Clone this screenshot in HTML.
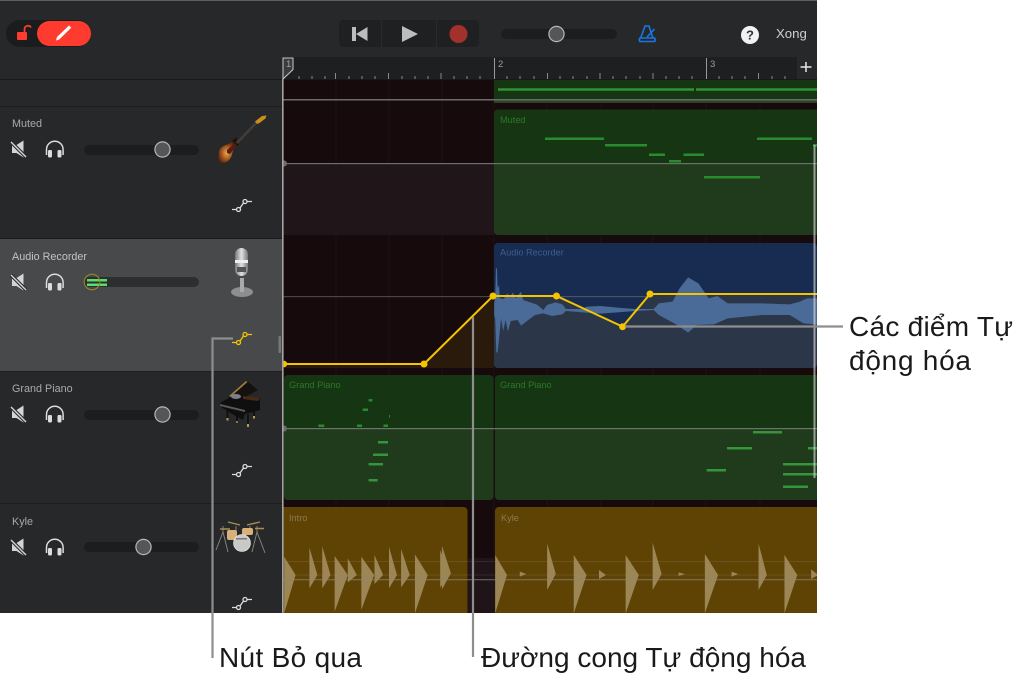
<!DOCTYPE html>
<html lang="vi"><head><meta charset="utf-8"><title>GarageBand</title>
<style>
html,body{margin:0;padding:0;background:#fff;width:1035px;height:686px;overflow:hidden}
svg{display:block;position:absolute;left:0;top:0}
text{font-family:"Liberation Sans",sans-serif}
.n{font-size:10.8px;fill:#a9aaab}
.r{font-size:9.2px}
.c{font-size:28px;fill:#1a1a1a}
</style></head><body>
<svg width="1035" height="686" viewBox="0 0 1035 686" xmlns="http://www.w3.org/2000/svg">
<defs>
<g id="mute"><path d="M12 145h4.500l7-4.500v17l-7-4.500H12z" fill="#d4d4d4"/><path d="M11 142l15 15" stroke="#27282a" stroke-width="3.500"/><path d="M11 142l15 15" stroke="#d4d4d4" stroke-width="1.400"/></g>
<g id="hp"><path d="M46.500 155v-5.500a8.300 8.300 0 0 1 16.600 0V155" fill="none" stroke="#dcdcdc" stroke-width="1.500"/><rect x="48" y="150" width="4" height="7.500" rx="1.200" fill="#dcdcdc"/><rect x="57.500" y="150" width="4" height="7.500" rx="1.200" fill="#dcdcdc"/></g>
<g id="auto" fill="none" stroke-width="1.300"><path d="M232 209.500h4M240 208l3.500-5M247 201.500h5"/><circle cx="238.500" cy="209.500" r="2"/><circle cx="245" cy="201.500" r="2"/></g>
<clipPath id="clipA"><rect x="494" y="243" width="323" height="125" rx="4"/></clipPath>
<clipPath id="clipT"><rect x="283" y="80" width="534" height="533"/></clipPath>
<linearGradient id="mic" x1="0" x2="1"><stop offset="0" stop-color="#777"/><stop offset=".5" stop-color="#e2e2e2"/><stop offset="1" stop-color="#777"/></linearGradient>
<radialGradient id="burst" cx=".4" cy=".62" r=".6"><stop offset="0" stop-color="#e8a94a"/><stop offset=".55" stop-color="#8c3f14"/><stop offset="1" stop-color="#1b0d08"/></radialGradient>
</defs>

<!-- app background -->
<rect width="817" height="613" fill="#27282a"/>
<rect width="817" height="1" fill="#5d5e5f"/>

<!-- top toolbar -->
<rect x="6" y="20" width="85" height="27" rx="13.500" fill="#1b1c1d"/>
<rect x="37" y="21" width="54" height="25" rx="12.500" fill="#ff3b30"/>
<rect x="17" y="32" width="10" height="8" rx="1" fill="#ff3b30"/>
<path d="M24.500 32v-3a3.500 3.500 0 0 1 6.500-1.500" fill="none" stroke="#ff3b30" stroke-width="1.700"/>
<path d="M56 40.500l1-3.500 12-11.500 2.200 2.200-12 11.800z" fill="#fff"/>
<rect x="339" y="20" width="140" height="27" rx="4" fill="#1f2021"/>
<path d="M381.500 20v27M436.500 20v27" stroke="#292a2b"/>
<rect x="352" y="27" width="4" height="14" fill="#bdbdbd"/><path d="M367.500 27v14L356 34z" fill="#bdbdbd"/>
<path d="M402 26v16l16-8z" fill="#bdbdbd"/>
<circle cx="458.500" cy="34" r="9" fill="#a2302b"/>
<rect x="501" y="29" width="116" height="10" rx="5" fill="#1c1d1e"/>
<circle cx="556.500" cy="34" r="7.600" fill="#555658" stroke="#b8b8b8" stroke-width="1.200"/>
<g fill="none" stroke="#1677e6" stroke-width="1.600"><path d="M640.500 38.500l4.500-12.500h4l4 12.500"/><rect x="639.500" y="38" width="15.500" height="3.500" rx=".8"/><path d="M647 37l7.500-8"/></g>
<circle cx="750" cy="35" r="9" fill="#f2f2f2"/>
<text x="750" y="39.500" text-anchor="middle" style="font-size:13px;font-weight:bold" fill="#333">?</text>
<text x="776" y="38" style="font-size:13.200px" fill="#cfcfcf">Xong</text>

<!-- ruler -->
<rect x="283" y="57" width="514" height="22" fill="#1e1f20"/>
<path d="M299 79v-3M312 79v-3M325 79v-3M335.500 79v-6M349 79v-3M362 79v-3M375 79v-3M388.500 79v-6M402 79v-3M415 79v-3M428 79v-3M441 79v-6M454 79v-3M467 79v-3M480 79v-3M507 79v-3M520 79v-3M534 79v-3M547.500 79v-6M560 79v-3M573 79v-3M587 79v-3M600 79v-6M613 79v-3M626 79v-3M640 79v-3M653 79v-6M666 79v-3M679 79v-3M692 79v-3M719 79v-3M732 79v-3M745 79v-3M758.500 79v-6M772 79v-3M785 79v-3" stroke="#8a8a8a" stroke-width="1"/>
<path d="M494.500 58v21M706.500 58v21" stroke="#9a9a9a"/>
<text x="498" y="67" class="r" fill="#9a9a9a" style="font-size:9.500px">2</text>
<text x="710" y="67" class="r" fill="#9a9a9a" style="font-size:9.500px">3</text>
<path d="M806 62v10M800.500 67h11" stroke="#e8e8e8" stroke-width="1.500"/>
<rect x="0" y="79" width="817" height="1" fill="#171819"/>

<!-- track headers -->
<rect x="0" y="106" width="282" height="1" fill="#1c1d1e"/>
<rect x="0" y="238" width="282" height="1" fill="#1a1b1c"/>
<rect x="0" y="239" width="282" height="132" fill="#48494b"/>
<rect x="0" y="371" width="282" height="1" fill="#1d1e1f"/>
<rect x="0" y="503" width="282" height="1" fill="#1c1d1e"/>
<rect x="278.500" y="336" width="2.500" height="17" rx="1" fill="#77787a"/>

<text x="12" y="127" class="n">Muted</text>
<use href="#mute"/><use href="#hp"/>
<rect x="84" y="145" width="115" height="10" rx="5" fill="#1c1d1e"/>
<circle cx="162.500" cy="149.500" r="7.600" fill="#555658" stroke="#b8b8b8" stroke-width="1.200"/>
<use href="#auto" stroke="#dcdcdc"/>

<text x="12" y="260" class="n" style="fill:#c2c3c4">Audio Recorder</text>
<use href="#mute" y="133"/><use href="#hp" y="133"/>
<rect x="84" y="277" width="115" height="10" rx="5" fill="#2d2e30"/>
<rect x="87" y="279" width="20" height="2.500" fill="#5bdc6d"/><rect x="87" y="283.500" width="20" height="2.500" fill="#5bdc6d"/>
<circle cx="92" cy="282" r="7.800" fill="none" stroke="#a28a22" stroke-width="1"/>
<use href="#auto" y="133" stroke="#f5c800"/>

<text x="12" y="392" class="n">Grand Piano</text>
<use href="#mute" y="265"/><use href="#hp" y="265"/>
<rect x="84" y="410" width="115" height="10" rx="5" fill="#1c1d1e"/>
<circle cx="162.500" cy="414.500" r="7.600" fill="#555658" stroke="#b8b8b8" stroke-width="1.200"/>
<use href="#auto" y="265" stroke="#dcdcdc"/>

<text x="12" y="525" class="n">Kyle</text>
<use href="#mute" y="398"/><use href="#hp" y="398"/>
<rect x="84" y="542" width="115" height="10" rx="5" fill="#1c1d1e"/>
<circle cx="143.500" cy="547" r="7.600" fill="#555658" stroke="#b8b8b8" stroke-width="1.200"/>
<use href="#auto" y="398" stroke="#dcdcdc"/>

<!-- bass guitar -->
<path d="M235 145L258 121" stroke="#433d3a" stroke-width="2.500"/>
<path d="M255 121.500l7-5.500 4.500-.5-1 3-6 4.500-2.500 1z" fill="#c98f1c"/>
<path d="M219 152c0-4 4-6 7-7 3-1 5-2 7-5l4-3-1 6 3 1c-2 2-5 4-6 7-1 3-1 5-3 8-3 4-9 5-11 2-1-2 0-6 0-9z" fill="url(#burst)"/>
<path d="M227 150l7-6 3 1-4 5-3 4-3-1z" fill="#5a1a12"/>

<!-- mic -->
<ellipse cx="242" cy="292" rx="11" ry="5" fill="#8d8e8f"/>
<rect x="240" y="278" width="4" height="14" fill="#aaa"/>
<rect x="235" y="248" width="13" height="28" rx="6.500" fill="url(#mic)"/>
<rect x="235" y="260" width="13" height="3" fill="#eee"/>
<rect x="237" y="267" width="9" height="5" fill="#555"/>

<!-- piano -->
<path d="M228 397l19-16 11 9-18 10z" fill="#15110e"/>
<path d="M229 396l17-15 1.500 1-17 15z" fill="#a07a3a"/>
<path d="M220 403l12-7 28 2v12l-15 4-2 6-11-6-11-7z" fill="#0f0f10"/>
<path d="M243 396l17 2-2 3-15-2z" fill="#4a2a16"/>
<ellipse cx="236" cy="396.500" rx="5" ry="2.500" fill="#7a7f88"/>
<path d="M220 404l25 6v2l-25-6z" fill="#5a5a5c"/>
<path d="M227.500 408v12M237 412v10M248 414v13M254 410v8" stroke="#0f0f10" stroke-width="1.800"/>
<rect x="226.500" y="418" width="2" height="2.500" fill="#b99a50"/><rect x="236" y="421" width="2" height="2" fill="#8c7440"/><rect x="247" y="424" width="2" height="3" fill="#b99a50"/><rect x="253" y="416" width="2" height="2.500" fill="#b99a50"/>

<!-- drums -->
<g stroke="#8a8a86" stroke-width=".9" fill="none"><path d="M223 532l-7 18M223 532l5 20M223 532v-6M257 532l8 21M257 532l-5 20M257 532v-6M236 526v5M250 526v3"/></g>
<path d="M228 522l12 3M247 525l13-3M220 529h10M255 528.500h9" stroke="#a8904e" stroke-width="1.400"/>
<rect x="227" y="530" width="10" height="10" rx="2" fill="#d8b078"/>
<rect x="242" y="528" width="11" height="7" rx="2" fill="#d8b078"/>
<circle cx="242" cy="543" r="8.500" fill="#c9c9c7" stroke="#eee" stroke-width=".6"/>
<rect x="236" y="538" width="11" height="1.500" fill="#777"/>

<!-- timeline -->
<g clip-path="url(#clipT)">
<rect x="283" y="80" width="534" height="533" fill="#170a0c"/>
<path d="M336 80v533M389 80v533M442 80v533M494 80v533M547 80v533M601 80v533M653 80v533M706 80v533M760 80v533" stroke="#fff" stroke-opacity=".035"/>

<!-- master row -->
<rect x="494" y="79" width="330" height="24" rx="3" fill="#163512"/>
<rect x="494" y="99" width="330" height="4" fill="#2a4426"/>
<path d="M498 89.500h196M696 89.500h121" stroke="#2e9434" stroke-width="2.500"/>
<rect x="283" y="99" width="534" height="1.500" fill="#6c6a6a"/>

<!-- muted row -->
<rect x="283" y="163" width="211" height="72" fill="#201518"/>
<rect x="494" y="109.500" width="330" height="125.500" rx="4" fill="#163512"/>
<path d="M494 163h330v68a4 4 0 0 1-4 4H498a4 4 0 0 1-4-4z" fill="#1f3b1b"/>
<rect x="283" y="163" width="534" height="1.200" fill="#6c6f6a"/>
<circle cx="284" cy="163.500" r="3" fill="#6c6a6a"/>
<text x="500" y="123" class="r" fill="#2a7a2a">Muted</text>
<g fill="#2a8a2e"><rect x="545" y="137.500" width="59" height="2.500"/><rect x="605" y="144" width="42" height="2.500"/><rect x="649" y="153.500" width="16" height="2.500"/><rect x="669" y="160" width="12" height="2.500"/><rect x="683.500" y="153.500" width="20.500" height="2.500"/><rect x="704" y="176" width="56" height="2.500"/><rect x="757" y="137.500" width="55" height="2.500"/><rect x="813" y="144" width="4" height="2.500"/></g>

<!-- audio row -->
<rect x="283" y="296" width="534" height="1.200" fill="#4a4445"/>
<polygon points="283,364 424,364 493,296 494,296 494,368 283,368" fill="#2a1a0c"/>
<g clip-path="url(#clipA)">
<rect x="494" y="243" width="323" height="125" fill="#172c50"/>
<rect x="494" y="296" width="323" height="1.200" fill="#4a5266"/>
<polygon points="493,296 556.500,296 622.600,326.700 650,294 817,294 817,368 493,368" fill="#2b3748"/>
<polygon transform="translate(280 235) scale(.3444 .3333)" fill="#4a6a98" points="622,205 625,190 627,100 630,100 632,160 636,150 638,190 650,192 660,175 668,188 676,172 684,190 700,170 706,195 720,200 745,208 765,225 775,210 800,202 820,208 830,222 880,222 890,215 930,213 980,218 1030,222 1085,222 1100,205 1140,200 1160,160 1185,127 1215,145 1245,190 1270,183 1300,205 1400,205 1480,208 1510,200 1530,190 1570,190 1570,270 1520,265 1480,240 1400,240 1300,250 1260,268 1210,270 1185,293 1150,268 1100,240 1085,225 1030,228 980,232 930,236 880,232 830,228 820,238 790,243 765,235 740,240 712,262 700,272 690,255 670,258 662,290 655,255 648,288 642,250 632,352 628,352 625,250 622,240"/>
</g>
<text x="500" y="255.500" class="r" fill="#3f5f90">Audio Recorder</text>

<!-- piano row -->
<rect x="284" y="375" width="209.500" height="125" rx="4" fill="#163512"/>
<rect x="495" y="375" width="330" height="125" rx="4" fill="#163512"/>
<path d="M284 429h209.500v67a4 4 0 0 1-4 4H288a4 4 0 0 1-4-4z" fill="#1f3b1b"/>
<path d="M495 429h330v71H499a4 4 0 0 1-4-4z" fill="#1f3b1b"/>
<rect x="283" y="428" width="534" height="1.200" fill="#6f726c"/>
<circle cx="284" cy="428.500" r="3" fill="#6c6a6a"/>
<text x="289" y="388" class="r" fill="#2a7a2a">Grand Piano</text>
<text x="500" y="388" class="r" fill="#2a7a2a">Grand Piano</text>
<g fill="#2a8a2e"><rect x="368.600" y="399" width="3.800" height="2.500"/><rect x="362.700" y="408.500" width="5.300" height="2.500"/><rect x="389" y="415" width="1" height="2.500"/><rect x="318.400" y="424.500" width="5.900" height="2.500"/><rect x="357" y="424.500" width="5" height="2.500"/><rect x="383.500" y="424.500" width="4.500" height="2.500"/></g>
<g fill="#35953a"><rect x="378" y="441" width="10" height="2.500"/><rect x="373" y="453.500" width="15" height="2.500"/><rect x="368.600" y="463" width="14.400" height="2.500"/><rect x="368.600" y="479" width="9" height="2.500"/><rect x="753" y="431" width="29" height="2.500"/><rect x="727" y="447" width="25" height="2.500"/><rect x="808" y="447" width="9" height="2.500"/><rect x="783" y="463" width="34" height="2.500"/><rect x="783" y="473" width="34" height="2.500"/><rect x="706.600" y="469" width="19.400" height="2.500"/><rect x="783" y="485.500" width="25" height="2.500"/></g>

<!-- drums row -->
<rect x="468" y="558" width="27" height="55" fill="#1f1417"/>
<path d="M283 507h180.500a4 4 0 0 1 4 4v102H283z" fill="#5e4305"/>
<path d="M495 511a4 4 0 0 1 4-4h326v106H495z" fill="#5e4305"/>
<rect x="283" y="561" width="534" height="1" fill="#fff" fill-opacity=".09"/>
<rect x="283" y="574.500" width="534" height="1" fill="#fff" fill-opacity=".09"/>
<text x="289" y="521" class="r" fill="#8c7a4e">Intro</text>
<text x="501" y="521" class="r" fill="#8c7a4e">Kyle</text>
<g transform="translate(280 500) scale(.346 .3333)" fill="#9d8656">
<polygon points="12,170 45,225 12,340"/><polygon points="85,142 108,225 85,265"/><polygon points="122,138 146,225 122,265"/><polygon points="158,168 196,225 158,335"/><polygon points="196,175 222,225 196,247"/><polygon points="235,170 272,225 235,330"/><polygon points="273,165 298,225 273,252"/><polygon points="315,140 338,225 315,265"/><polygon points="350,147 375,225 350,262"/><polygon points="390,163 427,225 390,340"/><polygon points="463,150 490,225 463,262"/><polygon points="468,137 494,220 468,268"/>
<polygon points="622,165 656,225 622,340"/><polygon points="693,215 712,222 693,230"/><polygon points="772,130 797,222 772,270"/><polygon points="849,165 886,225 849,340"/><polygon points="922,210 942,225 922,237"/><polygon points="999,165 1037,225 999,340"/><polygon points="1077,128 1103,222 1077,270"/><polygon points="1152,217 1170,222 1152,228"/><polygon points="1228,162 1266,225 1228,340"/><polygon points="1305,215 1324,222 1305,230"/><polygon points="1383,130 1407,225 1383,270"/><polygon points="1458,165 1495,225 1458,340"/><polygon points="1535,208 1555,225 1535,237"/>
</g>
<rect x="283" y="579" width="534" height="1.300" fill="#8a8680" fill-opacity=".6"/>

<!-- automation curve -->
<polyline points="283,364 424,364 493,296 556.500,296 622.600,326.700 650,294 817,294" fill="none" stroke="#f5c400" stroke-width="2"/>
<g fill="#f5c400"><circle cx="284" cy="364" r="3.200"/><circle cx="424" cy="364" r="3.500"/><circle cx="493" cy="296" r="3.500"/><circle cx="556.500" cy="296" r="3.500"/><circle cx="622.600" cy="326.700" r="3.500"/><circle cx="650" cy="294" r="3.500"/></g>
</g>

<!-- scroll line on right -->
<rect x="813.500" y="145" width="2" height="333" fill="#d8d8d8" fill-opacity=".65"/>

<!-- playhead -->
<path d="M283 79l10-9.500V58h-10z" fill="#3b3c3e" stroke="#c9c9c9" stroke-width="1"/>
<text x="286" y="67" fill="#a0a0a0" style="font-size:9.500px">1</text>
<rect x="282" y="79" width="1.600" height="534" fill="#a4a4a4"/>

<!-- callout lines -->
<path d="M233 338.500h-20.500V658" fill="none" stroke="#8e8e8e" stroke-width="2.200"/>
<path d="M473 317v340" stroke="#8e8e8e" stroke-width="2.200"/>
<path d="M625 326.500h218" stroke="#8e8e8e" stroke-width="2.200"/>

<!-- captions -->
<text x="849" y="336" class="c" textLength="164">Các điểm Tự</text>
<text x="849" y="370" class="c" textLength="122">động hóa</text>
<text x="219" y="667" class="c" textLength="143">Nút Bỏ qua</text>
<text x="481" y="667" class="c" textLength="325">Đường cong Tự động hóa</text>
</svg>
</body></html>
